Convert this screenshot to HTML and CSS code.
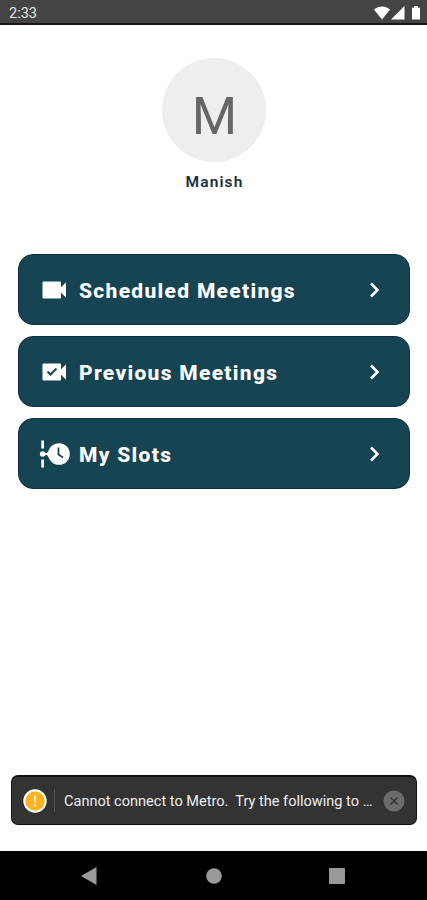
FILE: index.html
```html
<!DOCTYPE html>
<html lang="en">
<head>
    <meta charset="UTF-8">
    <meta name="viewport" content="width=device-width, initial-scale=1.0">
    <title>Meetings</title>
    <link rel="stylesheet" href="styles.css">
</head>
<body>
    <header class="status-bar">
        <span class="time">2:33</span>
        <svg class="status-icons" width="46" height="14" viewBox="0 0 46 14" fill="#fff">
            <path d="M0 3.6C4.8-.6 11.200-.6 16 3.600L8 13.500z"/>
            <path d="M30.500 0v13.500H17z"/>
            <path d="M38 1.700h2V0h4v1.700h2v11.800h-8z"/>
        </svg>
    </header>

    <main>
        <section class="profile">
            <div class="avatar">M</div>
            <div class="name">Manish</div>
        </section>

        <nav class="menu">
            <a class="menu-item">
                <svg class="icon" width="32" height="32" viewBox="0 0 32 32" fill="#fff">
                    <path d="M4.500 7.500h16.500q1 0 1 1v4.800l5-4.800v15l-5-4.800v4.800q0 1-1 1H4.500q-1 0-1-1v-15q0-1 1-1z"/>
                </svg>
                <span class="label">Scheduled Meetings</span>
                <svg class="chevron" width="12" height="18" viewBox="0 0 12 18"><path d="M2 2.500L8.500 9 2 15.500"/></svg>
            </a>
            <a class="menu-item">
                <svg class="icon" width="32" height="32" viewBox="0 0 32 32" fill="#fff">
                    <path d="M4.500 7.500h16.500q1 0 1 1v4.800l5-4.800v15l-5-4.800v4.800q0 1-1 1H4.500q-1 0-1-1v-15q0-1 1-1z"/>
                    <path d="M8.500 15.500l3 3 6-6" fill="none" stroke="#174452" stroke-width="2"/>
                </svg>
                <span class="label">Previous Meetings</span>
                <svg class="chevron" width="12" height="18" viewBox="0 0 12 18"><path d="M2 2.500L8.500 9 2 15.500"/></svg>
            </a>
            <a class="menu-item">
                <svg class="icon" width="32" height="32" viewBox="0 0 32 32" fill="#fff">
                    <path d="M2.300 2.500h2.700v8H2.300zM2.300 21.500h2.700v8H2.300z"/>
                    <circle cx="3.700" cy="16" r="2.800"/>
                    <path d="M5 15h3l3.500-5v12L8 17H5z"/>
                    <circle cx="20" cy="16" r="10.800"/>
                    <path d="M19.500 9.500v7l4.500 3" fill="none" stroke="#174452" stroke-width="1.700"/>
                </svg>
                <span class="label">My Slots</span>
                <svg class="chevron" width="12" height="18" viewBox="0 0 12 18"><path d="M2 2.500L8.500 9 2 15.500"/></svg>
            </a>
        </nav>

        <div class="toast">
            <svg class="warning" width="24" height="24" viewBox="0 0 24 24">
                <circle cx="12" cy="12" r="10.700" fill="#fbb321" stroke="#fff" stroke-width="2"/>
                <path d="M11 6.500h2l-.4 7.300h-1.200zM11 15.300h2v2h-2z" fill="#fff"/>
            </svg>
            <span class="divider"></span>
            <span class="message">Cannot connect to Metro.&nbsp; Try the following to …</span>
            <svg class="close" width="22" height="22" viewBox="0 0 22 22">
                <circle cx="11" cy="11" r="10.500" fill="#6b6b6b"/>
                <path d="M7.500 7.500l7 7M14.500 7.500l-7 7" stroke="#333" stroke-width="1.300"/>
            </svg>
        </div>
    </main>

    <footer class="nav-bar">
        <svg width="16" height="18" viewBox="0 0 16 18"><path d="M0 9L15.500 0v18z"/></svg>
        <svg width="18" height="16" viewBox="0 0 18 16"><circle cx="10" cy="8" r="7.800"/></svg>
        <svg width="16" height="16" viewBox="0 0 16 16"><rect width="16" height="16" rx="1"/></svg>
    </footer>
</body>
</html>
```
FILE: styles.css
```css
:root {
    --primary: #174452;
    --primary-edge: #102f42;
    --bar-bg: #444;
    --toast-bg: #333;
    --nav-icon: #999;
}

* {
    box-sizing: border-box;
}

body {
    margin: 0;
    height: 900px;
    display: flex;
    flex-direction: column;
    background: #fff;
    font-family: Roboto, sans-serif;
    overflow: hidden;
}

svg {
    display: block;
    flex: none;
}

.status-bar {
    height: 25px;
    padding: 2px 7px 0 9px;
    display: flex;
    align-items: center;
    justify-content: space-between;
    background: var(--bar-bg);
    border-bottom: 2px solid #151515;
    color: #e6e6e6;
}

.time {
    padding-top: 3px;
    font-size: 14.5px;
    line-height: 20px;
}

main {
    flex: 1;
    display: flex;
    flex-direction: column;
}

.profile {
    padding-top: 33px;
    display: flex;
    flex-direction: column;
    align-items: center;
}

.avatar {
    width: 104px;
    height: 104px;
    padding: 13px 0 0 2px;
    border-radius: 50%;
    background: #eee;
    color: #666;
    font-size: 52px;
    line-height: 92px;
    text-align: center;
}

.name {
    margin-top: 10px;
    padding-left: 2px;
    color: #16303f;
    font-size: 15.5px;
    font-weight: 600;
    letter-spacing: 1.1px;
    line-height: 20px;
}

.menu {
    margin: 62px 17px 0 18px;
    display: flex;
    flex-direction: column;
    gap: 11px;
}

.menu-item {
    height: 71px;
    padding: 0 28px 0 20px;
    display: flex;
    align-items: center;
    background: var(--primary);
    border: 1px solid var(--primary-edge);
    border-radius: 15px;
    color: #fff;
}

.label {
    flex: 1;
    margin-left: 8px;
    padding-top: 2px;
    font-size: 21px;
    font-weight: 800;
    letter-spacing: 1.3px;
    line-height: 26px;
}

.chevron path {
    fill: none;
    stroke: #fff;
    stroke-width: 2.5;
}

.toast {
    height: 50px;
    margin: auto 10px 26px 11px;
    padding: 0 11px;
    display: flex;
    align-items: center;
    background: var(--toast-bg);
    border: 1px solid #111;
    border-top-width: 2px;
    border-radius: 7px;
    color: #eee;
}

.divider {
    width: 1px;
    height: 23px;
    margin: 0 9px 0 7px;
    background: #505050;
}

.message {
    flex: 1;
    padding-top: 3px;
    font-size: 14.55px;
    line-height: 20px;
    white-space: nowrap;
}

.nav-bar {
    height: 49px;
    padding: 0 82px 0 81px;
    display: flex;
    align-items: center;
    justify-content: space-between;
    background: #000;
    fill: var(--nav-icon);
}
```
